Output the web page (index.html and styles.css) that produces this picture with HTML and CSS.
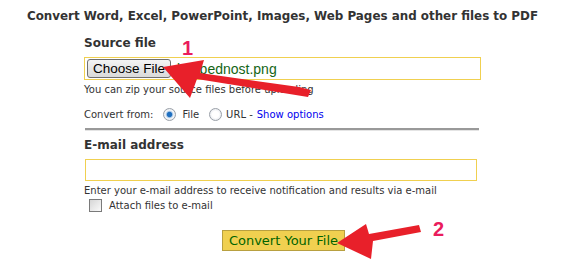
FILE: index.html
```html
<!DOCTYPE html>
<html lang="en">

<head>
    <meta charset="UTF-8">
    <title>Convert to PDF</title>
    <link rel="stylesheet" href="styles.css">
</head>

<body>
    <div class="page">
        <h1 class="title">Convert Word, Excel, PowerPoint, Images, Web Pages and other files to PDF</h1>

        <form class="convert">
            <h2 class="label">Source file</h2>
            <div class="file-box">
                <span class="choose">Choose File</span>
                <span class="file-name">bezbednost.png</span>
            </div>
            <p class="hint">You can zip your source files before uploading</p>

            <div class="from">
                <span class="from-label">Convert from:</span>
                <span class="radio checked"></span>
                <span class="from-file">File</span>
                <span class="radio"></span>
                <span class="from-url">URL -</span>
                <a class="options" href="#">Show options</a>
            </div>

            <hr class="rule">

            <h2 class="label">E-mail address</h2>
            <div class="email-box"></div>
            <p class="hint">Enter your e-mail address to receive notification and results via e-mail</p>
            <div class="attach">
                <span class="check"></span>
                <span>Attach files to e-mail</span>
            </div>

            <div class="submit-row">
                <span class="submit">Convert Your File</span>
            </div>
        </form>

        <!-- hand drawn annotations -->
        <span class="step step-one">1</span>
        <span class="step step-two">2</span>
        <svg class="arrows" width="565" height="261" viewBox="0 0 565 261">
            <path d="M299 87 L311 90 L308 97 L197 79 L190 98 L163 67 L204 60 L200 73 Z" fill="#e8202a" />
            <path d="M419 225 L421 232 L373 241 L371 259 L337 243 L366 224 L369 234 Z" fill="#e8202a" />
        </svg>
    </div>
</body>

</html>
```

FILE: styles.css
```css
body {
    margin: 0;
    background-color: #fff;
    font-family: "DejaVu Sans", Verdana, sans-serif;
    color: #333;
}

.page {
    position: relative;
    width: 565px;
    height: 261px;
    overflow: hidden;
}

.title {
    margin: 0;
    padding-top: 9px;
    text-align: center;
    font-size: 11.9px;
    font-weight: bold;
    color: #333;
}

.convert {
    width: 397px;
    margin: 13px auto 0;
}

.label {
    margin: 0 0 7px;
    font-size: 12px;
    font-weight: bold;
    color: #333;
}

.file-box {
    display: flex;
    align-items: center;
    gap: 6px;
    height: 21px;
    padding: 0 2px;
    border: 1px solid #f0d050;
}

.choose {
    display: inline-flex;
    align-items: center;
    height: 17px;
    padding: 0 5px;
    border: 1px solid #707070;
    border-radius: 3px;
    background: linear-gradient(#f4f4f4, #dadada);
    font-family: "Liberation Sans", Arial, sans-serif;
    font-size: 13.5px;
    color: #000;
}

.file-name {
    font-family: "Liberation Sans", Arial, sans-serif;
    font-size: 14px;
    color: #156515;
}

.hint {
    margin: 4px 0 0;
    font-size: 10px;
    color: #333;
}

.from {
    display: flex;
    align-items: center;
    margin-top: 13px;
    font-size: 10px;
}

.radio {
    width: 11px;
    height: 11px;
    border: 1px solid #9aa0a8;
    border-radius: 50%;
    background: radial-gradient(circle, #fff 40%, #d8dde4);
}

.from-label + .radio {
    margin-left: 10px;
}

.from-file {
    margin: 0 10px 0 6px;
}

.from-url {
    margin: 0 4px 0 4px;
}

.radio.checked {
    background: radial-gradient(circle, #1f6fbf 28%, #a8c8e8 40%, #f4f6f8 55%, #d8dde4);
}

.options {
    color: #0000ee;
    text-decoration: none;
}

.rule {
    margin: 7px 2px 0 1px;
    border: 0;
    border-top: 2px solid #999;
    border-bottom: 1px solid #e4e4e4;
    height: 0;
}

.convert .rule + .label {
    margin-top: 7px;
}

.email-box {
    width: 390px;
    height: 20px;
    margin-left: 1px;
    border: 1px solid #f0d050;
}

.attach {
    display: flex;
    align-items: center;
    gap: 7px;
    margin-top: 3px;
    padding-left: 5px;
    font-size: 10px;
}

.check {
    width: 11px;
    height: 11px;
    border: 1px solid #7a7a7a;
    background: linear-gradient(135deg, #d6d6d6, #fafafa);
}

.submit-row {
    display: flex;
    justify-content: center;
    margin-top: 18px;
    padding-left: 2px;
}

.submit {
    padding: 2px 6px;
    border: 1px solid #b8a040;
    background-color: #f0d050;
    font-size: 13px;
    line-height: 15px;
    color: #006400;
}

.step {
    position: absolute;
    font-family: "Liberation Sans", Arial, sans-serif;
    font-size: 20px;
    font-weight: bold;
    color: #ea1c5c;
}

.step-one {
    left: 182px;
    top: 37px;
}

.step-two {
    left: 433px;
    top: 218px;
}

.arrows {
    position: absolute;
    left: 0;
    top: 0;
}
```
